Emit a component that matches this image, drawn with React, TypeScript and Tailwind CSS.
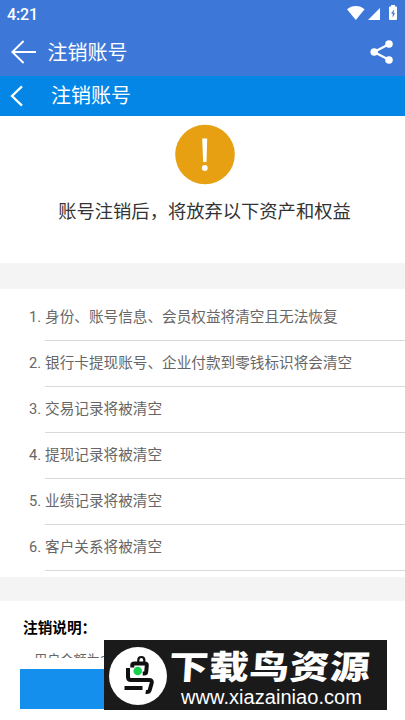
const items = [
  '身份、账号信息、会员权益将清空且无法恢复',
  '银行卡提现账号、企业付款到零钱标识将会清空',
  '交易记录将被清空',
  '提现记录将被清空',
  '业绩记录将被清空',
  '客户关系将被清空',
];

function StatusBar() {
  return (
    <div className="flex h-7 items-center justify-between pl-[7px] pr-2 text-white">
      <span className="text-[16px] font-medium leading-7 tracking-[-0.1px] pt-px">4:21</span>
      <div className="flex h-7 items-start">
        <svg className="mt-[6px] mr-[3px]" width="18" height="14" viewBox="0 0 18 14" fill="currentColor">
          <path d="M0 3.3C2.4 1.2 5.4 0 8.8 0s6.4 1.2 8.8 3.3L8.8 14Z" />
        </svg>
        <svg className="mt-2 mr-[9px]" width="12" height="12" viewBox="0 0 12 12" fill="currentColor">
          <path d="M12 0v12H0Z" />
        </svg>
        <svg className="mt-[5px]" width="8" height="15" viewBox="0 0 8 15">
          <path d="M2 0h4v1.4h1q1 0 1 1V14q0 1-1 1H1q-1 0-1-1V2.4q0-1 1-1h1Z" fill="white" />
          <path d="M5.3 4.3 2 8.5h1.7v4.2L6 8H4.5Z" fill="#3d78d8" />
        </svg>
      </div>
    </div>
  );
}

function AppBar() {
  return (
    <div className="flex h-12 items-center pl-[11px] pr-[11px] text-white">
      <svg width="25" height="24" viewBox="0 0 25 24" fill="none" stroke="currentColor" strokeWidth="1.9">
        <path d="M12.6 1 1.3 12l11.3 11M1.3 12H25" />
      </svg>
      <h1 className="ml-[11.5px] flex-1 pt-0.5 text-[20px] font-normal leading-[46px]">注销账号</h1>
      <svg width="24" height="24" viewBox="0 0 24 24" fill="currentColor">
        <path d="M19.3 4 4 12l15.3 8" fill="none" stroke="currentColor" strokeWidth="2.2" />
        <circle cx="4.2" cy="12" r="3.8" />
        <circle cx="19" cy="4" r="3.8" />
        <circle cx="19" cy="20" r="3.8" />
      </svg>
    </div>
  );
}

function Watermark() {
  return (
    <div className="absolute left-[104px] top-[640px] flex h-[70px] w-[283px] items-center bg-[#1a1a1a] text-white">
      <svg className="ml-[5px] mt-[2px] shrink-0" width="58" height="58" viewBox="0 0 58 58" fill="none">
        <circle cx="29" cy="29" r="29" fill="white" />
        <g stroke="#101010" strokeWidth="4">
          <path d="M23.3 20.5V18q0-1.5 2-1.5h10.5q2.2 0 2 2L37.2 25q-.2 1.5-2 1.5h-1.5" />
          <path d="M19 21v9q0 3 3 3h18q3.5 0 2.7 3l-2 7q-.7 2.5-4 2" />
          <path d="M15.5 41h18" />
        </g>
        <path d="M29.3 15v-2q0-3 3-3t3 3v2" stroke="#101010" strokeWidth="2.2" />
        <circle cx="28.7" cy="24" r="4.3" fill="#16d14d" />
      </svg>
      <div className="ml-[2px] flex flex-col pt-[7px]">
        <span className="origin-left -skew-x-3 scale-x-[1.2] whitespace-nowrap font-['Noto_Sans_CJK_SC',sans-serif] text-[33px] font-black leading-[37px] tracking-[0.6px]">下载鸟资源</span>
        <span className="ml-[12px] whitespace-nowrap font-['Liberation_Sans',sans-serif] text-[20px] leading-[26px] tracking-[0.05px]">www.xiazainiao.com</span>
      </div>
    </div>
  );
}

export default function App() {
  return (
    <div className="relative h-[720px] w-[405px] overflow-hidden bg-white font-['Roboto','Noto_Sans_CJK_SC',sans-serif]">
      <header className="bg-[#3d78d8]">
        <StatusBar />
        <AppBar />
      </header>
      <div className="flex h-10 items-center bg-[#0386e6] pl-[10px] text-white">
        <svg width="13" height="22" viewBox="0 0 13 22" fill="none" stroke="currentColor" strokeWidth="2.3">
          <path d="M12 1.3 2 11l10 9.7" />
        </svg>
        <h2 className="ml-7 text-[20px] font-normal leading-10">注销账号</h2>
      </div>

      <section className="flex h-[147px] flex-col items-center pl-1 pt-2">
        <svg width="60" height="61" viewBox="0 0 60 61">
          <circle cx="30" cy="30.5" r="29.8" fill="#e6a012" />
          <path d="M27.2 14.5h5L31.5 38h-3.4Z" fill="white" />
          <circle cx="29.8" cy="44" r="2.9" fill="white" />
        </svg>
        <p className="mt-[13px] whitespace-nowrap text-[18.3px] leading-7 text-[#333]">账号注销后，将放弃以下资产和权益</p>
      </section>

      <div className="h-[26px] bg-[#f4f4f4]" />

      <ol className="h-[288px] pt-[6px] text-[14.63px] text-[#666]">
        {items.map((text, i) => (
          <li key={text} className="flex h-[46px] pl-[29px]">
            <span className="w-4 shrink-0 leading-[45px]">{i + 1}.</span>
            <span className="flex-1 whitespace-nowrap border-b border-[#d9d9d9] leading-[45px]">{text}</span>
          </li>
        ))}
      </ol>

      <div className="h-6 bg-[#f4f4f4]" />

      <section className="h-[57px] overflow-hidden">
        <h3 className="pl-[23px] pt-[15px] text-[14.63px] font-bold leading-6 text-black">注销说明：</h3>
        <p className="mt-[11px] whitespace-nowrap pl-[34px] text-[13.2px] leading-5 text-[#666]">用户金额为0</p>
      </section>
      <button className="ml-5 mt-[11px] block h-10 w-[365px] bg-[#158fee]" aria-label="注销账号" />

      <Watermark />
    </div>
  );
}
